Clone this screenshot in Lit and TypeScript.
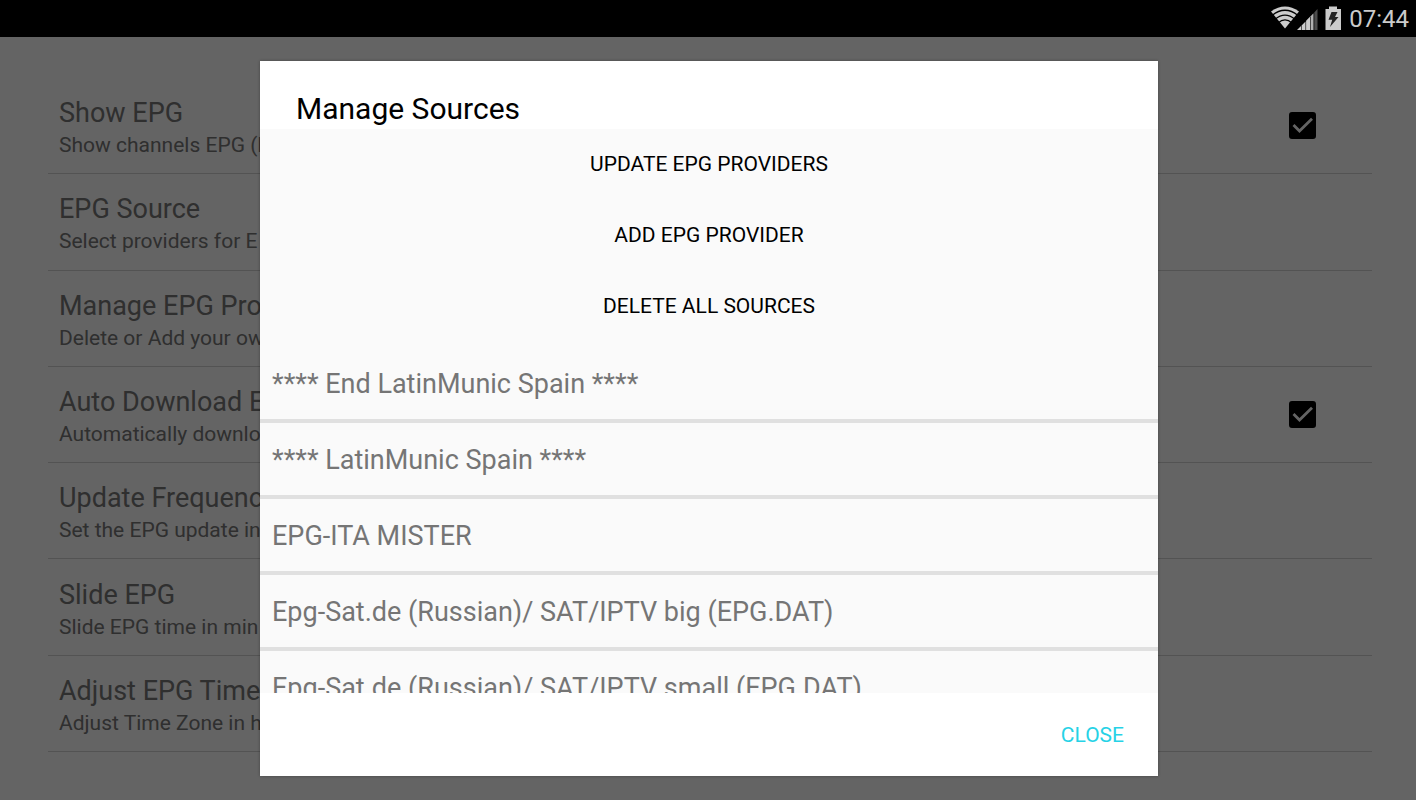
import { LitElement, html, css, svg } from "lit";
import { customElement, property, state } from "lit/decorators.js";

interface Setting {
  title: string;
  summary: string;
  checked?: boolean;
}

const SETTINGS: Setting[] = [
  { title: "Show EPG", summary: "Show channels EPG (E", checked: true },
  { title: "EPG Source", summary: "Select providers for E" },
  { title: "Manage EPG Pro", summary: "Delete or Add your ow" },
  { title: "Auto Download E", summary: "Automatically downlo", checked: true },
  { title: "Update Frequenc", summary: "Set the EPG update in" },
  { title: "Slide EPG", summary: "Slide EPG time in min" },
  { title: "Adjust EPG Time", summary: "Adjust Time Zone in h" },
];

const ACTIONS = ["UPDATE EPG PROVIDERS", "ADD EPG PROVIDER", "DELETE ALL SOURCES"];

const SOURCES = [
  "**** End LatinMunic Spain ****",
  "**** LatinMunic Spain ****",
  "EPG-ITA MISTER",
  "Epg-Sat.de (Russian)/ SAT/IPTV big (EPG.DAT)",
  "Epg-Sat.de (Russian)/ SAT/IPTV small (EPG.DAT)",
];

@customElement("status-bar")
class StatusBar extends LitElement {
  static styles = css`
    :host {
      display: flex;
      align-items: center;
      justify-content: flex-end;
      height: 37px;
      padding-right: 7px;
      background: #000;
      color: #cbcbcb;
      font-size: 24px;
      line-height: 37px;
    }
    .icons {
      display: block;
      width: 72px;
      height: 26px;
      margin-right: 6px;
    }
    .time {
      padding-top: 2px;
    }
  `;

  render() {
    return html`
      <svg class="icons" viewBox="0 0 72 26" role="img" aria-label="Wi-Fi, signal and charging">
        ${svg`
          <path fill="#cbcbcb" d="M0 5.600Q14-4.600 28 5.600L14 22.500Z"/>
          <g fill="none" stroke="#000" stroke-width="1.3">
            <path d="M1 9.500Q14-1 27 9.500"/>
            <path d="M4 13.300Q14 4.800 24 13.300"/>
            <path d="M7 17Q14 10.800 21 17"/>
          </g>
          <path fill="#000" d="M25 24.500L48 1V25H25Z"/>
          <path fill="#cbcbcb" d="M26 24L30 20V24ZM30.600 19.400L34.500 15.400V24H30.600ZM35.100 14.800L39 10.800V24H35.100Z"/>
          <path fill="#b0b0b0" d="M39.600 10.200L42.500 7.200V24H39.600Z"/>
          <path fill="#4c4c4c" d="M43.300 6.400L46.500 3V24H43.300Z"/>
          <path fill="#cbcbcb" d="M58 .5H66V3H70V24H54.500V3H58Z"/>
          <path fill="#222" d="M60.500 6H66.500L64 11H67.500L59 21L61.200 13.800H57.500Z"/>
        `}
      </svg>
      <time class="time">07:44</time>
    `;
  }
}

@customElement("settings-list")
class SettingsList extends LitElement {
  static styles = css`
    :host {
      display: block;
      box-sizing: border-box;
      padding: 41px 44px 48px 48px;
      background: #fafafa;
      color: #757575;
    }
    .list {
      display: flex;
      flex-direction: column;
      height: 100%;
      margin: 0;
      padding: 0;
      list-style: none;
    }
    .row {
      display: flex;
      flex: 1;
      align-items: center;
      justify-content: space-between;
      box-sizing: border-box;
      padding: 0 56px 0 11px;
      border-bottom: 1px solid #d0d0d0;
    }
    .text {
      padding-top: 3px;
    }
    .title {
      display: block;
      font-size: 27px;
      line-height: 36px;
    }
    .summary {
      display: block;
      font-size: 21px;
      line-height: 28px;
    }
    .check {
      display: grid;
    }
    .box,
    .mark {
      grid-area: 1 / 1;
      width: 27px;
      height: 27px;
      margin: 0;
    }
    .box {
      appearance: none;
      border-radius: 3px;
      border: 2px solid #000;
    }
    .box:checked {
      background: #000;
    }
    .mark {
      pointer-events: none;
      fill: none;
      stroke: #fafafa;
      stroke-width: 2.8;
    }
  `;

  render() {
    return html`
      <ul class="list">
        ${SETTINGS.map(
          (s, i) => html`
            <li class="row">
              <label class="text" for="setting-${i}">
                <span class="title">${s.title}</span>
                <span class="summary">${s.summary}</span>
              </label>
              ${s.checked === undefined
                ? null
                : html`<span class="check">
                    <input class="box" id="setting-${i}" type="checkbox" ?checked=${s.checked} />
                    <svg class="mark" viewBox="0 0 27 27" aria-hidden="true">
                      <path d="M4.500 13L10.500 19L23 6.800" />
                    </svg>
                  </span>`}
            </li>
          `
        )}
      </ul>
    `;
  }
}

@customElement("sources-dialog")
class SourcesDialog extends LitElement {
  @property({ attribute: false }) sources: string[] = [];

  static styles = css`
    :host {
      display: flex;
      justify-content: center;
      box-sizing: border-box;
      padding: 24px 24px 24px 26px;
      background: rgba(0, 0, 0, 0.6);
    }
    .dialog {
      display: flex;
      flex-direction: column;
      position: static;
      width: 100%;
      max-width: 898px;
      height: auto;
      min-height: 0;
      max-height: none;
      margin: 0;
      padding: 0;
      border: 0;
      background: #fff;
      color: #000;
      box-shadow: 0 0 3px rgba(0, 0, 0, 0.3);
    }
    .heading {
      margin: 0;
      padding: 30px 36px 2px;
      font-size: 30px;
      font-weight: 400;
      line-height: 36px;
    }
    .content {
      flex: 1;
      min-height: 0;
      overflow-y: auto;
      scrollbar-width: none;
      background: #fafafa;
    }
    button {
      border: 0;
      background: none;
      font-family: inherit;
      cursor: pointer;
    }
    .actions {
      display: grid;
      padding-bottom: 5px;
    }
    .action {
      height: 71px;
      padding: 0 0 2px;
      color: #000;
      font-size: 21px;
    }
    .sources {
      margin: 0;
      padding: 0;
      list-style: none;
    }
    .item {
      border-bottom: 4px solid #e0e0e0;
    }
    .source {
      display: block;
      width: 100%;
      height: 72px;
      padding: 2px 12px 0;
      color: #757575;
      font-size: 27px;
      text-align: left;
    }
    .footer {
      display: flex;
      justify-content: flex-end;
      align-items: center;
      height: 83px;
      padding: 0 22px;
    }
    .close {
      padding: 12px;
      color: #26d2e6;
      font-size: 21px;
    }
  `;

  private close() {
    this.dispatchEvent(new CustomEvent("dismiss"));
  }

  render() {
    return html`
      <dialog class="dialog" open aria-labelledby="heading">
        <h1 class="heading" id="heading">Manage Sources</h1>
        <div class="content">
          <div class="actions">
            ${ACTIONS.map((a) => html`<button class="action" type="button">${a}</button>`)}
          </div>
          <ul class="sources">
            ${this.sources.map(
              (s) => html`<li class="item"><button class="source" type="button">${s}</button></li>`
            )}
          </ul>
        </div>
        <div class="footer">
          <button class="close" type="button" @click=${this.close}>CLOSE</button>
        </div>
      </dialog>
    `;
  }
}

@customElement("app-root")
class AppRoot extends LitElement {
  @state() private open = true;

  static styles = css`
    :host {
      display: flex;
      flex-direction: column;
      height: 100vh;
      font-family: Roboto, sans-serif;
    }
    .stage {
      display: grid;
      flex: 1;
      min-height: 0;
      grid-template: minmax(0, 1fr) / minmax(0, 1fr);
    }
    .layer {
      grid-area: 1 / 1;
      min-height: 0;
    }
  `;

  render() {
    return html`
      <status-bar></status-bar>
      <main class="stage">
        <settings-list class="layer"></settings-list>
        ${this.open
          ? html`<sources-dialog
              class="layer"
              .sources=${SOURCES}
              @dismiss=${() => (this.open = false)}
            ></sources-dialog>`
          : null}
      </main>
    `;
  }
}
